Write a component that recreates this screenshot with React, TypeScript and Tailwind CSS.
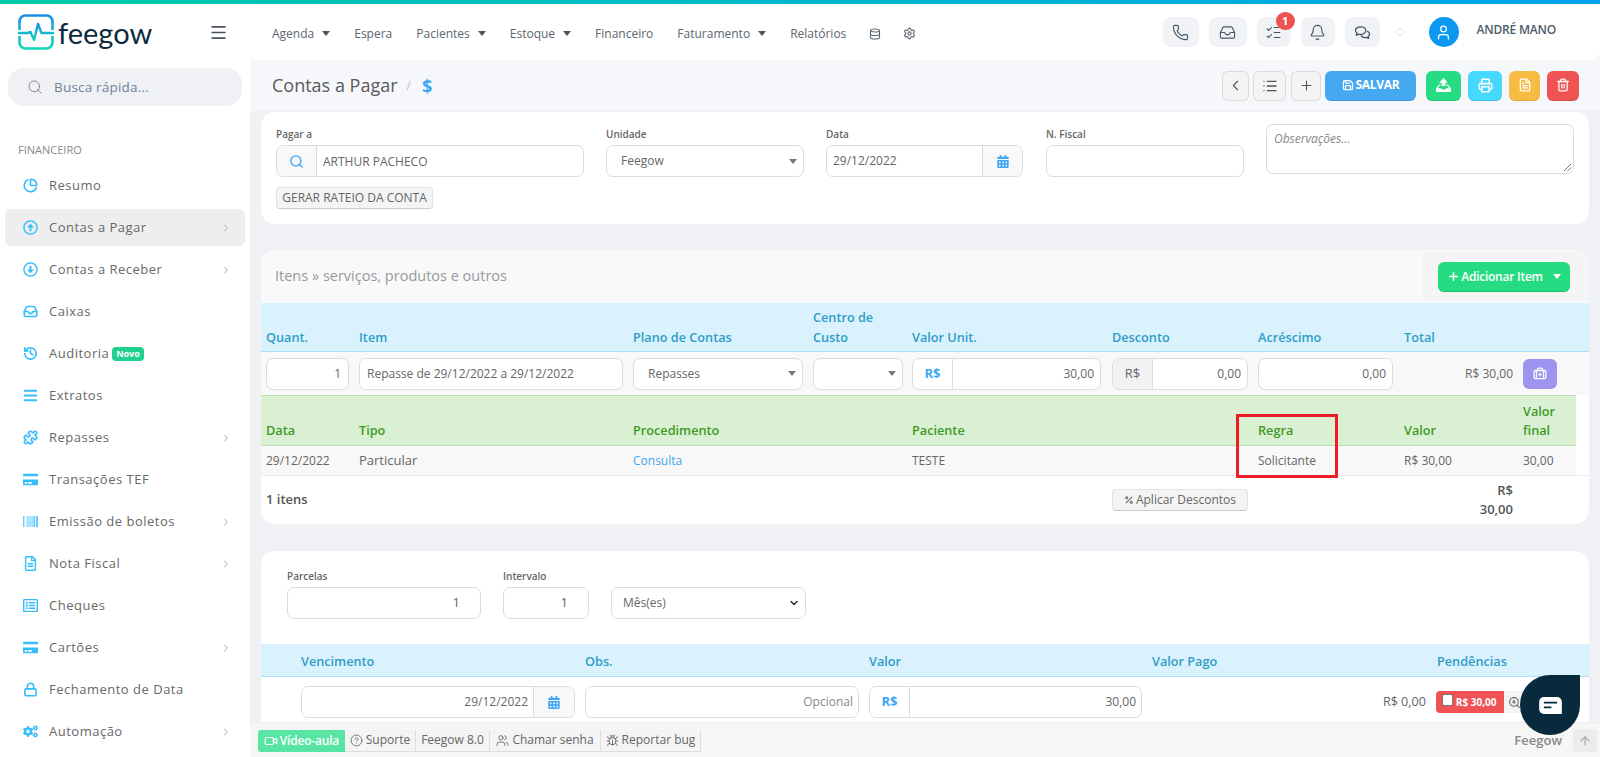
import React from "react";
import { Phone, Inbox, ListChecks, Bell, User, Save, ChevronLeft, ChevronRight, List, Plus, Printer, FileText, Trash2, Search, Database, Settings, Menu, Percent, Video, CircleHelp, Users, Bug, ZoomIn, ArrowUp, BriefcaseMedical, ChevronDown, ChartPie, History, Puzzle, Lock } from "lucide-react";
import { FaRegArrowAltCircleUp, FaRegArrowAltCircleDown, FaBars, FaCreditCard, FaBarcode, FaRegFileAlt, FaRegListAlt, FaCogs, FaCalendarAlt } from "react-icons/fa";

const Caret = ({ className = "" }: { className?: string }) => (
  <svg viewBox="0 0 8 5" className={`w-2 h-[5px] ${className}`} fill="currentColor"><path d="M0 0h8L4 5z" /></svg>
);

const Bubbles = ({ className = "" }: { className?: string }) => (
  <svg viewBox="0 0 18 16" className={className} fill="none" stroke="currentColor" strokeWidth="1.400" strokeLinejoin="round">
    <path d="M7 2c3 0 5.500 1.700 5.500 4S10 10 7 10c-.7 0-1.300-.1-1.900-.2L2.500 11l.6-2.500C2 7.700 1.500 7 1.500 6 1.500 3.700 4 2 7 2z" />
    <path d="M13.800 6.500c1.600.6 2.700 1.800 2.700 3.200 0 1-.5 1.800-1.400 2.400l.5 2.200-2.400-1.100c-2.200.4-4.700-.4-5.700-2.200" />
  </svg>
);

const TrayUp = ({ className = "" }: { className?: string }) => (
  <svg viewBox="0 0 16 15" className={className} fill="currentColor">
    <path d="M8 0l4.500 5H10v3.500H6V5H3.500z" />
    <path d="M3.500 7h1.300v1.400H3.800L2 11h3.200l.8 1.300h4l.8-1.300H14l-1.800-2.600h-1V7h1.300L16 11v4H0v-4z" />
  </svg>
);

const nav: [string, boolean][] = [["Agenda", true], ["Espera", false], ["Pacientes", true], ["Estoque", true], ["Financeiro", false], ["Faturamento", true], ["Relatórios", false]];

const Tray = ({ className = "" }: { className?: string }) => <Inbox className={className} strokeWidth={2.6} />;
const Pie = ({ className = "" }: { className?: string }) => <ChartPie className={className} strokeWidth={2.6} />;
const Hist = ({ className = "" }: { className?: string }) => <History className={className} strokeWidth={2.6} />;
const Puz = ({ className = "" }: { className?: string }) => <Puzzle className={className} strokeWidth={2.6} />;
const Lk = ({ className = "" }: { className?: string }) => <Lock className={className} strokeWidth={2.6} />;

const side: [any, string, boolean][] = [
  [Pie, "Resumo", false],
  [FaRegArrowAltCircleUp, "Contas a Pagar", true],
  [FaRegArrowAltCircleDown, "Contas a Receber", true],
  [Tray, "Caixas", false],
  [Hist, "Auditoria", false],
  [FaBars, "Extratos", false],
  [Puz, "Repasses", true],
  [FaCreditCard, "Transações TEF", false],
  [FaBarcode, "Emissão de boletos", true],
  [FaRegFileAlt, "Nota Fiscal", true],
  [FaRegListAlt, "Cheques", false],
  [FaCreditCard, "Cartões", true],
  [Lk, "Fechamento de Data", false],
  [FaCogs, "Automação", true],
];

const Logo = () => (
  <svg viewBox="0 0 36 36" className="w-[36px] h-[36px] shrink-0" fill="none">
    <defs>
      <linearGradient id="lg" x1="0" y1="0" x2="0" y2="1">
        <stop offset="0" stopColor="#1b8fe8" />
        <stop offset="1" stopColor="#12d6b8" />
      </linearGradient>
    </defs>
    <path d="M1.500 16V7.500a6 6 0 0 1 6-6h21a6 6 0 0 1 6 6V16M1.500 22v6.500a6 6 0 0 0 6 6h21a6 6 0 0 0 6-6V22" stroke="url(#lg)" strokeWidth="2.600" />
    <path d="M0 19h9.500l3-1 3.500 8 4-16 3.500 9h12.500" stroke="url(#lg)" strokeWidth="2.400" strokeLinejoin="round" />
  </svg>
);

const Box = ({ className = "", children }: { className?: string; children?: React.ReactNode }) => (
  <div className={`h-[32px] flex items-center rounded-[7px] border border-[#dcdcdc] bg-white text-[12px] text-[#666] ${className}`}>{children}</div>
);
const Addon = ({ className = "", children }: { className?: string; children?: React.ReactNode }) => (
  <div className={`h-full flex items-center justify-center bg-[#f8f8f8] rounded-l-[7px] border-r border-[#dcdcdc] shrink-0 ${className}`}>{children}</div>
);
const Label = ({ children }: { children: React.ReactNode }) => (
  <div className="text-[10px] font-semibold text-[#666] leading-[14px] mb-[4px]">{children}</div>
);
const Btn = ({ className = "", children }: { className?: string; children?: React.ReactNode }) => (
  <div className={`h-[30px] flex items-center justify-center rounded-[6px] border-b border-black/10 ${className}`}>{children}</div>
);

const cols = "grid grid-cols-[93px_274px_180px_99px_200px_146px_146px_119px_1fr] pl-[5px]";

const foot: [any, string, string][] = [
  [CircleHelp, "Suporte", "w-[71px]"],
  [null, "Feegow 8.0", "w-[74px]"],
  [Users, "Chamar senha", "w-[111px]"],
  [Bug, "Reportar bug", "w-[100px]"],
];

export default function App() {
  return (
    <div className="relative h-screen w-full overflow-hidden bg-[#f6f7fa] flex flex-col text-[#666] font-['Open_Sans',sans-serif]">
      <div className="h-1 shrink-0 bg-gradient-to-r from-[#05cba6] to-[#04a2ee]" />
      {/* header */}
      <header className="h-[56px] shrink-0 bg-white flex items-center rounded-br-[8px]">
        <div className="w-[250px] shrink-0 flex items-center pl-[18px] pr-[22px]">
          <Logo />
          <span className="ml-[4px] text-[29px] leading-none text-[#0d2b3e] font-['Lato',sans-serif]">feegow</span>
          <Menu className="ml-auto w-[19px] h-[19px] text-[#4a5560]" strokeWidth={2.2} />
        </div>
        <nav className="flex items-center gap-6 pl-[22px] pt-[3px] text-[12px] text-[#5b6670]">
          {nav.map(([t, c]) => (
            <div key={t} className="flex items-center gap-2">
              <span>{t}</span>
              {c && <Caret className="text-[#4a5560]" />}
            </div>
          ))}
          <Database className="w-[12px] h-[12px] -ml-px" strokeWidth={2.2} />
          <Settings className="w-[13px] h-[13px] ml-[-2px]" strokeWidth={2} />
        </nav>
        <div className="ml-auto flex items-center gap-[10px] pr-[44px] text-[#44586a]">
          {[[Phone, "w-[36px]"], [Inbox, "w-[38px]"], [ListChecks, "w-[34px]"], [Bell, "w-[34px]"], [Bubbles, "w-[35px]"]].map(([I, w]: any, i) => (
            <div key={i} className={`relative h-[30px] ${w} rounded-[8px] bg-[#f0f2f5] flex items-center justify-center`}>
              <I className="w-[17px] h-[17px]" strokeWidth={1.6} />
              {i === 2 && <span className="absolute -top-[5px] left-[19px] w-[19px] h-[18px] rounded-full bg-[#ee5354] text-white text-[11px] font-bold flex items-center justify-center">1</span>}
            </div>
          ))}
          <div className="w-[8px] h-[8px] rounded-full border border-[#e2e4e8] mx-[6px]" />
          <div className="w-[30px] h-[30px] rounded-full bg-[#0a98f0] flex items-center justify-center ml-[9px]">
            <User className="w-[17px] h-[17px] text-white" strokeWidth={1.8} />
          </div>
          <span className="ml-[8px] text-[12px] font-semibold tracking-[-0.2px] text-[#4c5c6a] -mt-[4px]">ANDRÉ MANO</span>
        </div>
      </header>

      <div className="flex-1 flex min-h-0">
        {/* sidebar */}
        <aside className="w-[250px] shrink-0 bg-white pt-[8px]">
          <div className="mx-[8px] w-[234px] h-[38px] rounded-[16px] bg-[#eff1f5] flex items-center pl-[19px] text-[13.500px] text-[#71839b] tracking-[0.2px]">
            <Search className="w-[16px] h-[16px] text-[#888] mr-[11px]" strokeWidth={1.5} />
            Busca rápida...
          </div>
          <div className="mt-[36px] pl-[18px] text-[11px] leading-[16px] text-[#8a8a8a]">FINANCEIRO</div>
          <div className="mt-[9px] flex flex-col px-[5px]">
            {side.map(([I, t, c]) => {
              const active = t === "Contas a Pagar";
              return (
                <div key={t} className={`h-[37px] mb-[5px] flex items-center pl-[18px] pr-[13px] rounded-[6px] text-[13px] tracking-[0.5px] text-[#686868] ${active ? "bg-[#eeeeee]" : ""}`}>
                  <I className="w-[15px] h-[15px] text-[#36bdfb] shrink-0" />
                  <span className="ml-[11px]">{t}</span>
                  {t === "Auditoria" && <span className="ml-[3px] px-[4px] h-[14px] rounded-[4px] bg-[#1fd08f] text-white text-[9px] font-bold tracking-normal leading-[14px]">Novo</span>}
                  {c && <ChevronRight className="ml-auto w-[12px] h-[12px] text-[#aaa]" />}
                </div>
              );
            })}
          </div>
        </aside>

        {/* main */}
        <main className="relative flex-1 min-w-0 bg-[#eff1f5]">
          <div className="h-[52px] bg-[#f6f7fa] flex items-center pl-[22px] pr-[21px] border-b border-[#f0f0f3]">
            <span className="text-[18px] text-[#5a5a5a]">Contas a Pagar</span>
            <span className="ml-[9px] text-[12px] text-[#bbb]">/</span>
            <span className="ml-[11px] mt-[2px] text-[18px] font-bold text-[#3ea6f4]">$</span>
            <div className="ml-auto flex items-center">
              <Btn className="w-[27px] bg-[#f4f4f4] border border-[#e4e4e4] text-[#555]"><ChevronLeft className="w-[17px] h-[17px]" strokeWidth={1.5} /></Btn>
              <Btn className="w-[33px] ml-[4px] bg-[#f4f4f4] border border-[#e4e4e4] text-[#555]"><List className="w-[16px] h-[16px]" strokeWidth={2} /></Btn>
              <Btn className="w-[30px] ml-[5px] bg-[#f4f4f4] border border-[#e4e4e4] text-[#555]"><Plus className="w-[15px] h-[15px]" strokeWidth={1.8} /></Btn>
              <Btn className="w-[91px] ml-[4px] bg-[#45a9f2] text-white text-[12px] font-bold gap-[2px] tracking-[-0.3px]"><Save className="w-[12px] h-[12px]" strokeWidth={2.500} />SALVAR</Btn>
              <Btn className="w-[35px] ml-[10px] bg-[#26dc82] text-white"><TrayUp className="w-[15px] h-[14px]" /></Btn>
              <Btn className="w-[34px] ml-[7px] bg-[#46d8fe] text-white"><Printer className="w-[15px] h-[15px]" strokeWidth={2.500} /></Btn>
              <Btn className="w-[31px] ml-[7px] bg-[#f6bb42] text-white"><FileText className="w-[14px] h-[14px]" strokeWidth={2.200} /></Btn>
              <Btn className="w-[32px] ml-[7px] bg-[#ef5354] text-white"><Trash2 className="w-[14px] h-[14px]" strokeWidth={2.200} /></Btn>
            </div>
          </div>

          <div className="px-[11px]">
            {/* card 1 */}
            <section className="h-[112px] rounded-[14px] bg-white pl-[15px] pr-[15px] flex">
              <div className="w-[308px] pt-[15px]">
                <Label>Pagar a</Label>
                <Box>
                  <Addon className="w-[40px]"><Search className="w-[15px] h-[15px] text-[#3ea6f4]" strokeWidth={2.2} /></Addon>
                  <span className="pl-[6px] pt-px">ARTHUR PACHECO</span>
                </Box>
                <div className="mt-[10px] w-[157px] h-[22px] rounded-[4px] bg-[#f4f4f4] border border-[#e2e2e2] border-b-[#ccc] flex items-center justify-center text-[12px] text-[#666]">GERAR RATEIO DA CONTA</div>
              </div>
              <div className="w-[198px] ml-[22px] pt-[15px]">
                <Label>Unidade</Label>
                <Box className="pl-[14px] pr-[6px] justify-between"><span>Feegow</span><Caret className="text-[#777]" /></Box>
              </div>
              <div className="w-[197px] ml-[22px] pt-[15px]">
                <Label>Data</Label>
                <Box className="justify-between">
                  <span className="pl-[6px]">29/12/2022</span>
                  <div className="w-[40px] h-full flex items-center justify-center bg-[#f8f8f8] border-l border-[#dcdcdc] rounded-r-[7px]"><FaCalendarAlt className="w-[12px] h-[13px] text-[#3ea6f4]" /></div>
                </Box>
              </div>
              <div className="w-[198px] ml-[23px] pt-[15px]">
                <Label>N. Fiscal</Label>
                <Box />
              </div>
              <div className="relative w-[308px] h-[50px] ml-[22px] mt-[12px] rounded-[7px] border border-[#dcdcdc] pl-[7px] pt-[5px] text-[12px] italic text-[#888]">
                Observações...
                <svg viewBox="0 0 10 10" className="absolute right-[1px] bottom-[1px] w-[9px] h-[9px]" stroke="#666" strokeWidth="1"><path d="M1 9L9 1M5 9L9 5" /></svg>
              </div>
            </section>

            {/* card 2 */}
            <section className="mt-[26px] h-[274px] rounded-[14px] bg-white overflow-hidden">
              <div className="h-[53px] bg-[#f8f9fa] flex">
                <span className="pl-[14px] pt-[15px] text-[14.500px] text-[#999]">Itens » serviços, produtos e outros</span>
                <div className="ml-auto w-[167px] h-[50px] mt-px bg-[#f5f5f5] pl-[16px] pt-[11px]">
                  <div className="w-[132px] h-[30px] rounded-[6px] bg-[#26dc82] border-b border-[#1fc070] text-white text-[12px] font-semibold tracking-[-0.25px] flex items-center justify-center gap-[1px]">
                    <Plus className="w-[13px] h-[13px]" strokeWidth={3} />Adicionar Item<Caret className="ml-[9px]" />
                  </div>
                </div>
              </div>
              <div className={`${cols} h-[49px] bg-[#d9f2fe] border-b border-[#a9dff8] items-end pb-[4px] text-[12.700px] leading-[20px] font-semibold text-[#2f9dc6]`}>
                <span>Quant.</span><span>Item</span><span>Plano de Contas</span><span>Centro de<br />Custo</span><span>Valor Unit.</span><span>Desconto</span><span>Acréscimo</span><span>Total</span>
              </div>
              <div className={`${cols} h-[43px] bg-[#f8f8f8] items-center`}>
                <Box className="w-[83px] justify-end pr-[7px]">1</Box>
                <Box className="w-[264px] pl-[7px]">Repasse de 29/12/2022 a 29/12/2022</Box>
                <Box className="w-[170px] pl-[14px] pr-[6px] justify-between"><span>Repasses</span><Caret className="text-[#777]" /></Box>
                <Box className="w-[90px] justify-end pr-[6px]"><Caret className="text-[#777]" /></Box>
                <Box className="w-[189px]"><Addon className="w-[40px] !bg-white text-[13px] font-bold text-[#3ea6f4]">R$</Addon><span className="ml-auto pr-[6px]">30,00</span></Box>
                <Box className="w-[136px]"><Addon className="w-[40px] !bg-[#f2f2f2] text-[13px] text-[#666]">R$</Addon><span className="ml-auto pr-[6px]">0,00</span></Box>
                <Box className="w-[135px] justify-end pr-[6px]">0,00</Box>
                <div className="w-[109px] text-right text-[12px]">R$ 30,00</div>
                <div className="w-[34px] h-[30px] rounded-[6px] bg-[#9e94f0] flex items-center justify-center text-white"><BriefcaseMedical className="w-[14px] h-[14px]" strokeWidth={2.200} /></div>
              </div>
              <div className="relative mr-[13px]">
                <div className={`${cols} h-[51px] bg-[#d9f0d3] border-y border-[#b7dfad] items-end pb-[5px] text-[12.700px] leading-[19px] font-semibold text-[#3f9a26]`}>
                  <span>Data</span><span>Tipo</span><span className="col-span-2">Procedimento</span><span className="col-span-2">Paciente</span><span>Regra</span><span>Valor</span><span>Valor<br />final</span>
                </div>
                <div className={`${cols} h-[29px] bg-[#f8f8f8] items-center text-[12px] text-[#666]`}>
                  <span>29/12/2022</span><span className="text-[13px]">Particular</span><span className="col-span-2 text-[#3ea6f4]">Consulta</span><span className="col-span-2">TESTE</span><span>Solicitante</span><span>R$ 30,00</span><span>30,00</span>
                </div>
                <div className="absolute left-[975px] top-[19px] w-[102px] h-[64px] border-[3px] border-[#ee1c25]" />
              </div>
              <div className={`${cols} h-[49px] border-t border-[#ececec] items-center text-[13px]`}>
                <span className="col-span-4 font-semibold text-[#555]">1 itens</span>
                <span />
                <div className="w-[136px] h-[22px] rounded-[4px] bg-[#f4f4f4] border border-[#e2e2e2] border-b-[#ccc] flex items-center justify-center gap-[2px] text-[12px]"><Percent className="w-[10px] h-[10px]" strokeWidth={2.500} />Aplicar Descontos</div>
                <span />
                <div className="w-[109px] text-right font-semibold text-[#555] leading-[19px]">R$<br />30,00</div>
              </div>
            </section>

            {/* card 3 */}
            <section className="mt-[27px] h-[200px] rounded-t-[14px] bg-white overflow-hidden">
              <div className="h-[93px] pl-[26px] pt-[18px] flex">
                <div className="w-[194px]"><Label>Parcelas</Label><Box className="justify-end pr-[20px] text-[13px]">1</Box></div>
                <div className="w-[86px] ml-[22px]"><Label>Intervalo</Label><Box className="justify-end pr-[20px] text-[13px]">1</Box></div>
                <div className="w-[195px] ml-[22px] pt-[18px]"><Box className="pl-[11px] pr-[5px] justify-between"><span>Mês(es)</span><ChevronDown className="w-[12px] h-[12px] text-[#333]" strokeWidth={3} /></Box></div>
              </div>
              <div className="h-[33px] bg-[#d9f2fe] border-b border-[#a9dff8] grid grid-cols-[284px_284px_283px_285px_1fr] pl-[40px] pt-[3px] items-center text-[12.700px] font-semibold text-[#2f9dc6]">
                <span>Vencimento</span><span>Obs.</span><span>Valor</span><span>Valor Pago</span><span>Pendências</span>
              </div>
              <div className="grid grid-cols-[284px_284px_283px_1fr] pl-[40px] pt-[9px] items-start">
                <Box className="w-[274px] justify-end">
                  <span className="pr-[5px]">29/12/2022</span>
                  <div className="w-[41px] h-full flex items-center justify-center bg-[#f8f8f8] border-l border-[#dcdcdc] rounded-r-[7px]"><FaCalendarAlt className="w-[12px] h-[13px] text-[#3ea6f4]" /></div>
                </Box>
                <Box className="w-[274px] justify-end pr-[5px] text-[#888]">Opcional</Box>
                <Box className="w-[273px]"><Addon className="w-[40px] !bg-white text-[13px] font-bold text-[#3ea6f4]">R$</Addon><span className="ml-auto pr-[5px]">30,00</span></Box>
                <div className="flex items-center h-[32px] text-[12.500px]">
                  <span className="ml-[231px]">R$ 0,00</span>
                  <div className="ml-[10px] w-[68px] h-[22px] rounded-l-[4px] bg-[#ef5354] flex items-center text-white text-[10px] font-bold pl-[6px] shrink-0">
                    <span className="w-[11px] h-[12px] bg-white border border-[#777] rounded-[2px] mr-[3px] -mt-[5px] shrink-0" />R$ 30,00
                  </div>
                  <div className="w-[21px] h-[22px] bg-[#f4f4f4] flex items-center justify-center shrink-0"><ZoomIn className="w-[13px] h-[13px]" /></div>
                </div>
              </div>
            </section>
          </div>

          {/* footer bar */}
          <div className="absolute left-0 right-0 bottom-0 h-[35px] bg-[#f6f6f6] border-t border-[#ececec] flex items-center pl-[8px] pr-[3px] pt-[1px]">
            <div className="w-[87px] h-[22px] rounded-l-[3px] bg-[#58e5a4] text-white text-[12px] font-semibold tracking-[-0.2px] flex items-center justify-center gap-[2px]"><Video className="w-[14px] h-[14px]" strokeWidth={2} />Vídeo-aula</div>
            {foot.map(([I, t, w]) => (
              <div key={t} className={`${w} h-[22px] bg-[#f4f4f4] border-r border-b border-[#dedede] text-[12px] text-[#666] flex items-center justify-center gap-[3px]`}>
                {I && <I className="w-[13px] h-[13px]" strokeWidth={1.6} />}{t}
              </div>
            ))}
            <span className="ml-auto text-[13px] font-semibold text-[#888]">Feegow</span>
            <div className="ml-[11px] w-[24px] h-[23px] rounded-[3px] bg-[#ececec] flex items-center justify-center text-[#aaa]"><ArrowUp className="w-[14px] h-[14px]" /></div>
          </div>
        </main>
      </div>

      {/* chat bubble */}
      <div className="absolute left-[1520px] top-[675px] w-[60px] h-[60px] rounded-full rounded-tr-[8px] bg-[#072b3c] flex items-center justify-center">
        <svg viewBox="0 0 24 18" className="w-[23px] h-[17px]"><path d="M5 0h14a5 5 0 0 1 5 5v13H5a5 5 0 0 1-5-5V5a5 5 0 0 1 5-5z" fill="#fff" /><path d="M5 6h14M5 11h8" stroke="#072b3c" strokeWidth="2" /></svg>
      </div>
    </div>
  );
}
